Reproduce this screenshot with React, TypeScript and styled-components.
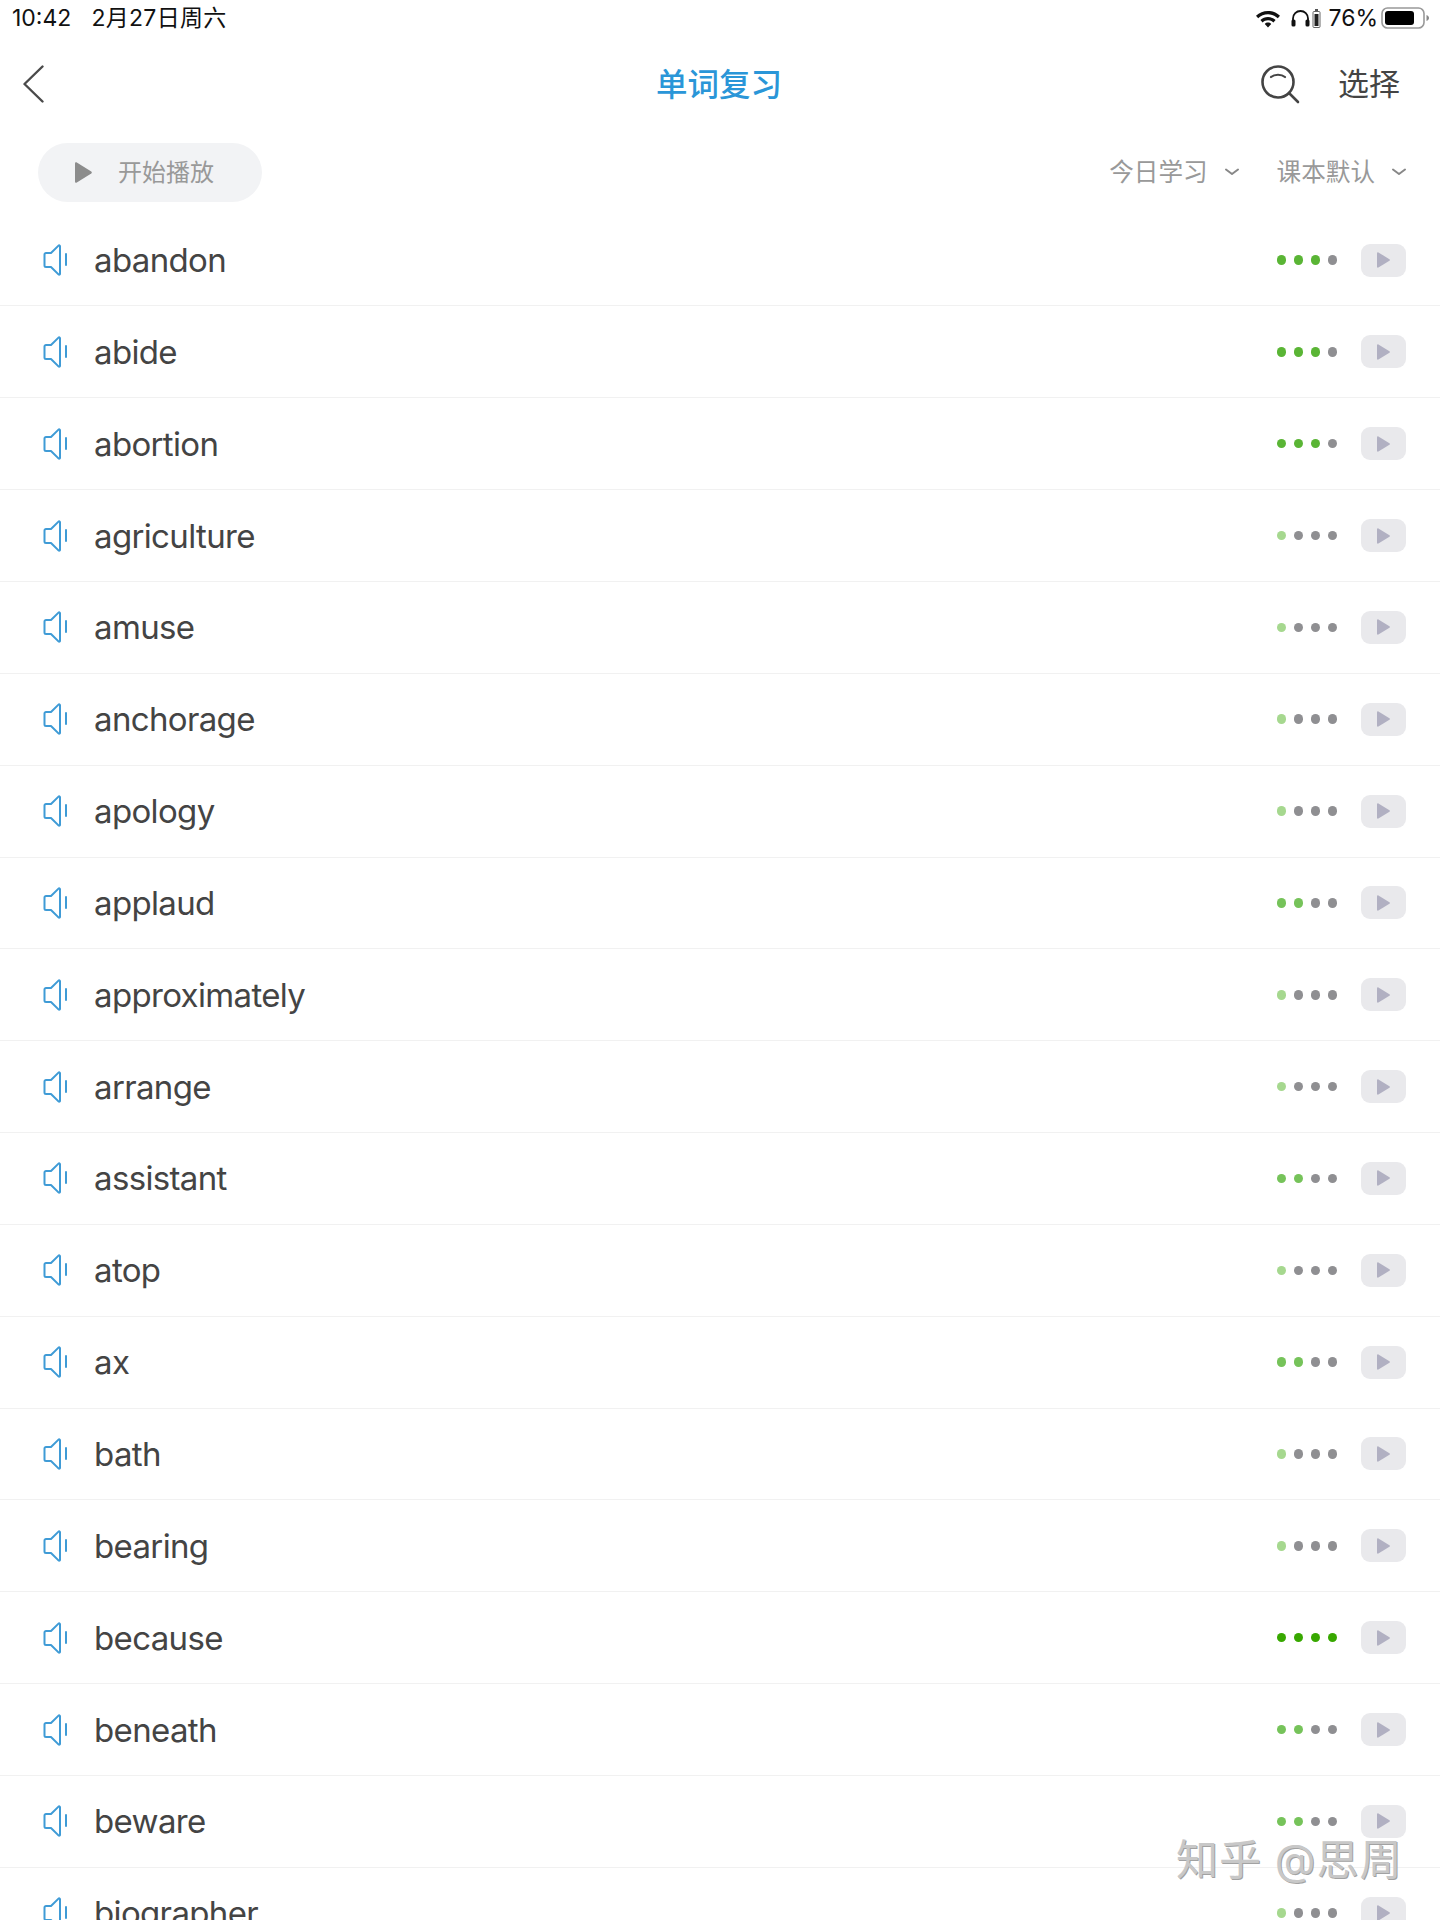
import React from "react";
import styled, { createGlobalStyle } from "styled-components";

const CJK = `"Inter", "Noto Sans CJK SC", sans-serif`;

const Global = createGlobalStyle`
  html, body { margin: 0; padding: 0; background: #fff; }
  body { width: 1440px; height: 1920px; overflow: hidden; font-family: ${CJK}; }
`;

const Page = styled.div`
  position: relative;
  width: 1440px;
  height: 1920px;
  overflow: hidden;
  background: #fff;
`;

const StatusBar = styled.div`
  height: 36px;
  padding: 0 10px 0 12px;
  display: flex;
  align-items: center;
  justify-content: space-between;
  font-size: 23px;
  color: #111;
`;

const StatusGroup = styled.div`
  display: flex;
  align-items: center;
`;

const StatusDate = styled.span`
  margin-left: 20px;
  padding-bottom: 5px;
  letter-spacing: 0.3px;
`;

const Percent = styled.span`
  margin: 0 3px 0 7px;
`;

const NavBar = styled.div`
  height: 96px;
  position: relative;
  display: flex;
  align-items: center;
  justify-content: space-between;
  padding: 0 40px 0 22px;
`;

const Title = styled.div`
  position: absolute;
  left: 0;
  right: 2px;
  padding-bottom: 5px;
  text-align: center;
  font-size: 31.5px;
  font-weight: 500;
  color: #2a96d8;
`;

const NavRight = styled.div`
  display: flex;
  align-items: center;
  gap: 38px;
  font-size: 31px;
  color: #444;
`;

const NavAction = styled.span`
  padding-bottom: 5px;
`;

const ToolRow = styled.div`
  height: 82.6px;
  box-sizing: border-box;
  padding: 0 34px 2.6px 38px;
  display: flex;
  align-items: center;
  justify-content: space-between;
`;

const PlayPill = styled.div`
  width: 224px;
  height: 59px;
  border-radius: 30px;
  background: #f2f3f5;
  display: flex;
  align-items: center;
  padding-left: 37px;
  box-sizing: border-box;
  gap: 26px;
  font-size: 24px;
  color: #999;
`;

const PillLabel = styled.span`
  padding-bottom: 4px;
`;

const Filters = styled.div`
  display: flex;
  align-items: center;
  gap: 38px;
`;

const Filter = styled.div`
  display: flex;
  align-items: center;
  gap: 17px;
  font-size: 24.6px;
  color: #999;
`;

const FilterLabel = styled.span`
  padding-bottom: 4px;
`;

const List = styled.div``;

const Row = styled.div`
  height: 91.85px;
  box-sizing: border-box;
  border-bottom: 1px solid #f1f1f1;
  display: flex;
  align-items: center;
  padding: 0 34px 0 43px;
`;

const Word = styled.div`
  margin-left: 27px;
  flex: 1;
  font-size: 33px;
  letter-spacing: -0.65px;
  color: #444;
`;

const Dots = styled.div`
  display: flex;
  gap: 7.4px;
  margin-right: 24px;
`;

const Dot = styled.span<{ $c: string }>`
  width: 9.5px;
  height: 9.5px;
  border-radius: 50%;
  background: ${(p) => p.$c};
`;

const PlayBtn = styled.div`
  width: 45px;
  height: 33px;
  border-radius: 9px;
  background: #e9e9ec;
  display: flex;
  align-items: center;
  justify-content: center;
`;

const Watermark = styled.div`
  position: absolute;
  left: 1176px;
  top: 1826px;
  font-size: 42px;
  letter-spacing: 1px;
  white-space: nowrap;
  color: #c8c8c8;
  text-shadow: 1px 1px 0 #a2a2a2;
`;

const G = "#5ab535";
const M = "#76c35a";
const L = "#a6d88f";
const D = "#38a800";
const X = "#8f8f92";

const rows: [string, string[]][] = [
  ["abandon", [G, G, G, X]],
  ["abide", [G, G, G, X]],
  ["abortion", [G, G, G, X]],
  ["agriculture", [L, X, X, X]],
  ["amuse", [L, X, X, X]],
  ["anchorage", [L, X, X, X]],
  ["apology", [L, X, X, X]],
  ["applaud", [M, M, X, X]],
  ["approximately", [L, X, X, X]],
  ["arrange", [L, X, X, X]],
  ["assistant", [M, M, X, X]],
  ["atop", [L, X, X, X]],
  ["ax", [M, M, X, X]],
  ["bath", [L, X, X, X]],
  ["bearing", [L, X, X, X]],
  ["because", [D, D, D, D]],
  ["beneath", [M, M, X, X]],
  ["beware", [M, M, X, X]],
  ["biographer", [L, X, X, X]],
];

const Speaker = () => (
  <svg width="24" height="32" viewBox="0 0 24 32" fill="none">
    <path
      d="M17 2.2v27.6c0 .9-.9 1.2-1.5.6L8 23H3a1.5 1.5 0 0 1-1.5-1.5v-11A1.5 1.5 0 0 1 3 9h5l7.5-7.4c.6-.6 1.5-.3 1.5.6z"
      stroke="#3f9bd6"
      strokeWidth="2"
      strokeLinejoin="round"
    />
    <path d="M23 10v11" stroke="#3f9bd6" strokeWidth="2" strokeLinecap="round" />
  </svg>
);

const Tri = ({ w, h, c }: { w: number; h: number; c: string }) => (
  <svg width={w} height={h} viewBox="0 0 14 16" preserveAspectRatio="none">
    <path d="M1.5 .4L13.4 7.2c.6.4.6 1.2 0 1.6L1.5 15.6C.8 16 0 15.6 0 14.8V1.2C0 .4.8 0 1.5 .4z" fill={c} />
  </svg>
);

const Chevron = () => (
  <svg width="14" height="8" viewBox="0 0 14 8" fill="none">
    <path d="M1 1.5l6 4.5 6-4.5" stroke="#888" strokeWidth="2" strokeLinecap="round" strokeLinejoin="round" />
  </svg>
);

export default function App() {
  return (
    <Page>
      <Global />
      <StatusBar>
        <StatusGroup>
          <span>10:42</span>
          <StatusDate>2月27日周六</StatusDate>
        </StatusGroup>
        <StatusGroup>
          <svg width="26" height="20" viewBox="0 0 26 20" fill="#111" style={{ marginRight: 10 }}>
            <path d="M13 3C8.4 3 4.3 4.8 1 7.8l2.2 2.4C5.9 7.8 9.3 6.3 13 6.3s7.1 1.5 9.8 3.9L25 7.8C21.7 4.8 17.6 3 13 3z" />
            <path d="M13 9c-2.9 0-5.6 1.1-7.6 3l2.2 2.4c1.4-1.3 3.3-2.1 5.4-2.1s4 .8 5.4 2.1l2.2-2.4C18.6 10.1 15.9 9 13 9z" />
            <path d="M13 14.6c-1.3 0-2.4.5-3.2 1.3L13 19.4l3.2-3.5c-.8-.8-1.9-1.3-3.2-1.3z" />
          </svg>
          <svg width="19" height="18" viewBox="0 0 19 18" fill="none">
            <path d="M2 15V9.5a7.5 7.5 0 0 1 15 0V15" stroke="#111" strokeWidth="1.8" />
            <rect x="0.5" y="10.5" width="4" height="7" rx="1.6" fill="#111" />
            <rect x="14.5" y="10.5" width="4" height="7" rx="1.6" fill="#111" />
          </svg>
          <svg width="9" height="19" viewBox="0 0 9 19" fill="none" style={{ marginLeft: 2 }}>
            <rect x="3" y="0" width="3" height="2" fill="#555" />
            <rect x="1" y="2.5" width="7" height="16" rx="1" stroke="#666" strokeWidth="1" />
            <rect x="2.5" y="5" width="4" height="12" fill="#222" />
          </svg>
          <Percent>76%</Percent>
          <svg width="49" height="22" viewBox="0 0 49 22" fill="none">
            <rect x="1" y="1" width="42" height="20" rx="5.5" stroke="#999" strokeWidth="1.6" />
            <rect x="4" y="4" width="29" height="14" rx="3" fill="#000" />
            <path d="M45.5 8c1.5.6 2.5 1.6 2.5 3s-1 2.4-2.5 3z" fill="#888" />
          </svg>
        </StatusGroup>
      </StatusBar>

      <NavBar>
        <svg width="22" height="38" viewBox="0 0 22 38" fill="none">
          <path d="M20.5 1.5L2.5 19l18 17.5" stroke="#4a4a4a" strokeWidth="2.4" strokeLinecap="round" strokeLinejoin="round" />
        </svg>
        <Title>单词复习</Title>
        <NavRight>
          <svg width="39" height="39" viewBox="0 0 39 39" fill="none">
            <circle cx="17" cy="17" r="15.5" stroke="#444" strokeWidth="2.6" />
            <path d="M10 12c3.5-3 10.5-3 14 0" stroke="#444" strokeWidth="2.2" strokeLinecap="round" />
            <path d="M28 28l9 9" stroke="#444" strokeWidth="2.6" strokeLinecap="round" />
          </svg>
          <NavAction>选择</NavAction>
        </NavRight>
      </NavBar>

      <ToolRow>
        <PlayPill>
          <Tri w={17} h={21} c="#8c8c8c" />
          <PillLabel>开始播放</PillLabel>
        </PlayPill>
        <Filters>
          <Filter>
            <FilterLabel>今日学习</FilterLabel>
            <Chevron />
          </Filter>
          <Filter>
            <FilterLabel>课本默认</FilterLabel>
            <Chevron />
          </Filter>
        </Filters>
      </ToolRow>

      <List>
        {rows.map(([w, dots]) => (
          <Row key={w}>
            <Speaker />
            <Word>{w}</Word>
            <Dots>
              {dots.map((c, i) => (
                <Dot key={i} $c={c} />
              ))}
            </Dots>
            <PlayBtn>
              <Tri w={13} h={16} c="#b1b0c2" />
            </PlayBtn>
          </Row>
        ))}
      </List>

      <Watermark>知乎 @思周</Watermark>
    </Page>
  );
}
